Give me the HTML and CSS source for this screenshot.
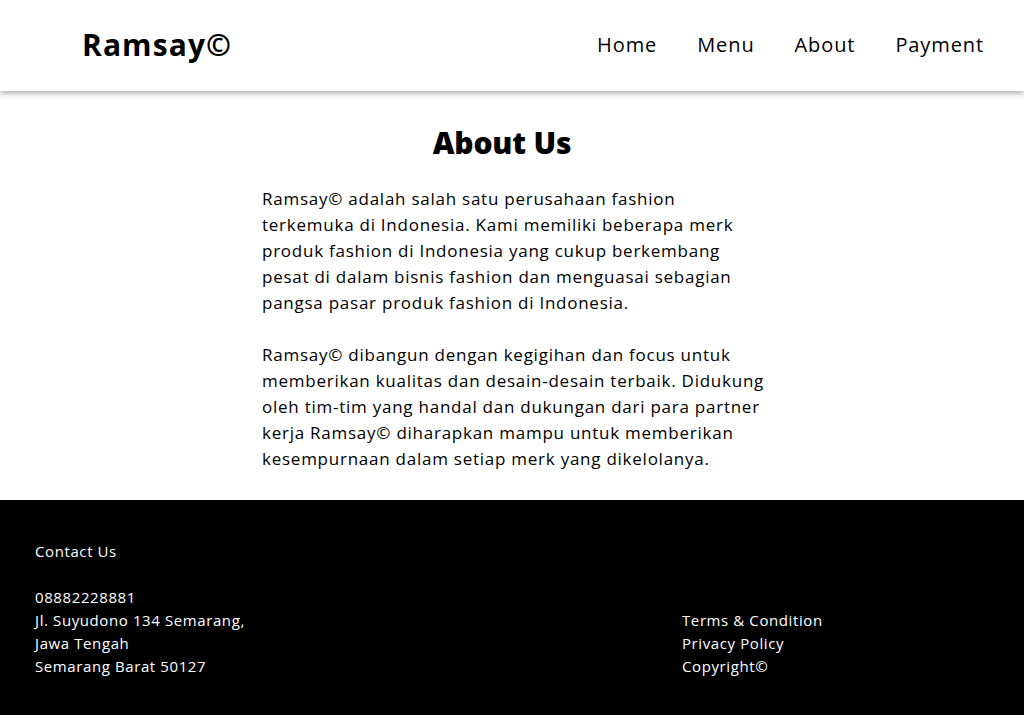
FILE: index.html
```html
<!DOCTYPE html>
<html lang="id">
<head>
<meta charset="utf-8">
<title>Ramsay© - About Us</title>
<link rel="stylesheet" href="styles.css">
</head>
<body>
<header class="site-header">
  <div class="logo">Ramsay©</div>
  <nav class="nav">
    <a href="#">Home</a>
    <a href="#">Menu</a>
    <a href="#">About</a>
    <a href="#">Payment</a>
  </nav>
</header>
<main class="about">
  <h1 class="about-title">About Us</h1>
  <div class="about-text">
    <p>Ramsay© adalah salah satu perusahaan fashion<br>terkemuka di Indonesia. Kami memiliki beberapa merk<br>produk fashion di Indonesia yang cukup berkembang<br>pesat di dalam bisnis fashion dan menguasai sebagian<br>pangsa pasar produk fashion di Indonesia.</p>
    <p>Ramsay© dibangun dengan kegigihan dan focus untuk<br>memberikan kualitas dan desain-desain terbaik. Didukung<br>oleh tim-tim yang handal dan dukungan dari para partner<br>kerja Ramsay© diharapkan mampu untuk memberikan<br>kesempurnaan dalam setiap merk yang dikelolanya.</p>
  </div>
</main>
<footer class="site-footer">
  <div class="contact">
    <div class="contact-title">Contact Us</div>
    <div>08882228881</div>
    <div>Jl. Suyudono 134 Semarang,</div>
    <div>Jawa Tengah</div>
    <div>Semarang Barat 50127</div>
  </div>
  <div class="links">
    <a href="#">Terms &amp; Condition</a>
    <a href="#">Privacy Policy</a>
    <a href="#">Copyright©</a>
  </div>
</footer>
</body>
</html>
```
FILE: styles.css
```css
* { box-sizing: border-box; }
html, body { margin: 0; padding: 0; }
body {
  font-family: "Open Sans", "Noto Sans", sans-serif;
  color: #000;
  background: #fff;
}
a { color: inherit; text-decoration: none; }

.site-header {
  height: 91px;
  display: flex;
  align-items: center;
  justify-content: space-between;
  padding: 0 40px 2px 82px;
  background: #fff;
  box-shadow: 0 2px 6px rgba(0,0,0,0.35);
  position: relative;
  z-index: 1;
}
.logo {
  font-size: 30px;
  font-weight: 700;
  letter-spacing: 1.1px;
}
.nav {
  display: flex;
  gap: 40px;
}
.nav a {
  font-size: 20px;
  font-weight: 400;
  letter-spacing: 0.9px;
}

.about {
  padding: 33px 0 28px;
}
.about-title {
  margin: 0;
  text-align: center;
  font-size: 30px;
  font-weight: 800;
  line-height: 38px;
  padding-right: 20px;
  letter-spacing: -0.2px;
}
.about-text {
  width: 500px;
  margin: 24px auto 0;
  font-size: 17px;
  line-height: 26px;
  letter-spacing: 0.75px;
}
.about-text p { margin: 0 0 26px; white-space: nowrap; }
.about-text p:last-child { margin-bottom: 0; }

.site-footer {
  background: #000;
  color: #fff;
  display: flex;
  align-items: flex-end;
  padding: 40px 35px 38px;
  font-size: 15px;
  font-weight: 500;
  line-height: 23px;
  letter-spacing: 0.6px;
}
.contact { width: 647px; }
.contact-title { margin-bottom: 23px; }
.links { display: flex; flex-direction: column; }
```
